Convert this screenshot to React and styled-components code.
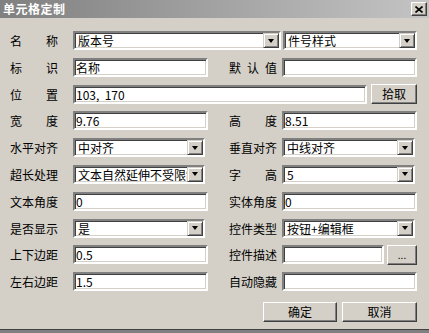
import React from "react";
import styled, { createGlobalStyle } from "styled-components";

const GlobalStyle = createGlobalStyle`
  html, body {
    margin: 0;
    padding: 0;
    background: #d4d0c8;
  }
  body {
    font-family: "Noto Sans CJK SC", "Liberation Sans", sans-serif;
    font-size: 12px;
    color: #000;
  }
`;

const Window = styled.div`
  width: 429px;
  height: 333px;
  box-sizing: border-box;
  background: #d4d0c8;
  display: flex;
  flex-direction: column;
  border-bottom: 3px solid #808080;
  box-shadow: inset 0 -1px 0 #404040;
`;

const TitleBar = styled.div`
  height: 18px;
  flex: 0 0 18px;
  display: flex;
  align-items: center;
  justify-content: space-between;
  padding: 0 2px 0 3px;
  background: linear-gradient(to right, #808080, #c4c4c4);
`;

const Title = styled.span`
  color: #fff;
  font-weight: bold;
  font-size: 12px;
  letter-spacing: 0.5px;
  line-height: 18px;
`;

const CloseBox = styled.div`
  width: 16px;
  height: 14px;
  box-sizing: border-box;
  background: #d4d0c8;
  border: 1px solid;
  border-color: #fff #404040 #404040 #fff;
  box-shadow: inset -1px -1px #808080;
  display: flex;
  align-items: center;
  justify-content: center;
`;

const Body = styled.div`
  flex: 1;
  display: flex;
  flex-direction: column;
  gap: 7.8px;
  padding: 13px 12px 0 10px;
`;

const Row = styled.div`
  display: flex;
  align-items: center;
  height: 19px;
`;

const Label = styled.span`
  width: 48px;
  flex: 0 0 48px;
  margin-left: ${(p) => p.$ml || 0}px;
  margin-right: ${(p) => (p.$right ? "5px" : "15px")};
  text-align: justify;
  text-align-last: justify;
  white-space: nowrap;
  line-height: 19px;
`;

const Field = styled.div`
  width: ${(p) => p.$w || 135}px;
  flex: 0 0 ${(p) => p.$w || 135}px;
  margin-left: ${(p) => p.$ml || 0}px;
  height: 19px;
  box-sizing: border-box;
  background: #fff;
  border: 2px solid;
  border-color: #808080 #fff #fff #808080;
  box-shadow: inset 1px 1px #404040, inset -1px -1px #d4d0c8;
  display: flex;
  align-items: center;
  overflow: hidden;
`;

const FieldText = styled.span`
  flex: 1;
  min-width: 0;
  padding-left: ${(p) => (p.$combo ? 3 : 1)}px;
  white-space: pre;
  overflow: hidden;
  line-height: 15px;
`;

const DropButton = styled.div`
  width: 16px;
  flex: 0 0 16px;
  height: 15px;
  box-sizing: border-box;
  background: #d4d0c8;
  border: 1px solid;
  border-color: #d4d0c8 #404040 #404040 #d4d0c8;
  box-shadow: inset 1px 1px #fff, inset -1px -1px #808080;
  display: flex;
  align-items: center;
  justify-content: center;
`;

const Arrow = styled.span`
  width: 0;
  height: 0;
  border-left: 3.5px solid transparent;
  border-right: 3.5px solid transparent;
  border-top: 4px solid #000;
`;

const Button = styled.button`
  width: ${(p) => p.$w}px;
  flex: 0 0 ${(p) => p.$w}px;
  height: ${(p) => p.$h || 20}px;
  margin-left: ${(p) => p.$ml || 0}px;
  padding: 0;
  box-sizing: border-box;
  background: #d4d0c8;
  border: 1px solid;
  border-color: #fff #404040 #404040 #fff;
  box-shadow: inset -1px -1px #808080;
  font-family: "Noto Sans CJK SC", "Liberation Sans", sans-serif;
  font-size: ${(p) => p.$fs || 12}px;
  color: #000;
  line-height: 1;
  display: flex;
  align-items: center;
  justify-content: center;
`;

const Actions = styled.div`
  display: flex;
  justify-content: flex-end;
  gap: 5px;
  margin-top: 3px;
`;

function Input({ value, w, ml }) {
  return (
    <Field $w={w} $ml={ml}>
      <FieldText>{value}</FieldText>
    </Field>
  );
}

function Combo({ value, w, ml }) {
  return (
    <Field $w={w} $ml={ml}>
      <FieldText $combo>{value}</FieldText>
      <DropButton>
        <Arrow />
      </DropButton>
    </Field>
  );
}

export default function App() {
  return (
    <>
      <GlobalStyle />
      <Window>
        <TitleBar>
          <Title>单元格定制</Title>
          <CloseBox>
            <svg width="8" height="7" viewBox="0 0 8 7">
              <path d="M0.5 0.5 L7.5 6.5 M7.5 0.5 L0.5 6.5" stroke="#000" strokeWidth="1.6" />
            </svg>
          </CloseBox>
        </TitleBar>
        <Body>
          <Row>
            <Label>名称</Label>
            <Combo value="版本号" w={208} />
            <Combo value="件号样式" w={134} ml={2} />
          </Row>
          <Row>
            <Label>标识</Label>
            <Input value="名称" />
            <Label $right $ml={21}>默认值</Label>
            <Input value="" />
          </Row>
          <Row>
            <Label>位置</Label>
            <Input value="103,  170" w={294} />
            <Button $w={46} $ml={4} $h={20}>拾取</Button>
          </Row>
          <Row>
            <Label>宽度</Label>
            <Input value="9.76" />
            <Label $right $ml={21}>高度</Label>
            <Input value="8.51" />
          </Row>
          <Row>
            <Label>水平对齐</Label>
            <Combo value="中对齐" w={132} />
            <Label $right $ml={24}>垂直对齐</Label>
            <Combo value="中线对齐" w={133} />
          </Row>
          <Row>
            <Label>超长处理</Label>
            <Combo value="文本自然延伸不受限制" w={132} />
            <Label $right $ml={24}>字高</Label>
            <Combo value="5" w={133} />
          </Row>
          <Row>
            <Label>文本角度</Label>
            <Input value="0" />
            <Label $right $ml={21}>实体角度</Label>
            <Input value="0" />
          </Row>
          <Row>
            <Label>是否显示</Label>
            <Combo value="是" w={132} />
            <Label $right $ml={24}>控件类型</Label>
            <Combo value="按钮+编辑框" w={133} />
          </Row>
          <Row>
            <Label>上下边距</Label>
            <Input value="0.5" />
            <Label $right $ml={21}>控件描述</Label>
            <Input value="" w={102} />
            <Button $w={30} $ml={3} $h={20} $fs={10}>...</Button>
          </Row>
          <Row>
            <Label>左右边距</Label>
            <Input value="1.5" />
            <Label $right $ml={21}>自动隐藏</Label>
            <Input value="" />
          </Row>
          <Actions>
            <Button $w={74}>确定</Button>
            <Button $w={75}>取消</Button>
          </Actions>
        </Body>
      </Window>
    </>
  );
}
